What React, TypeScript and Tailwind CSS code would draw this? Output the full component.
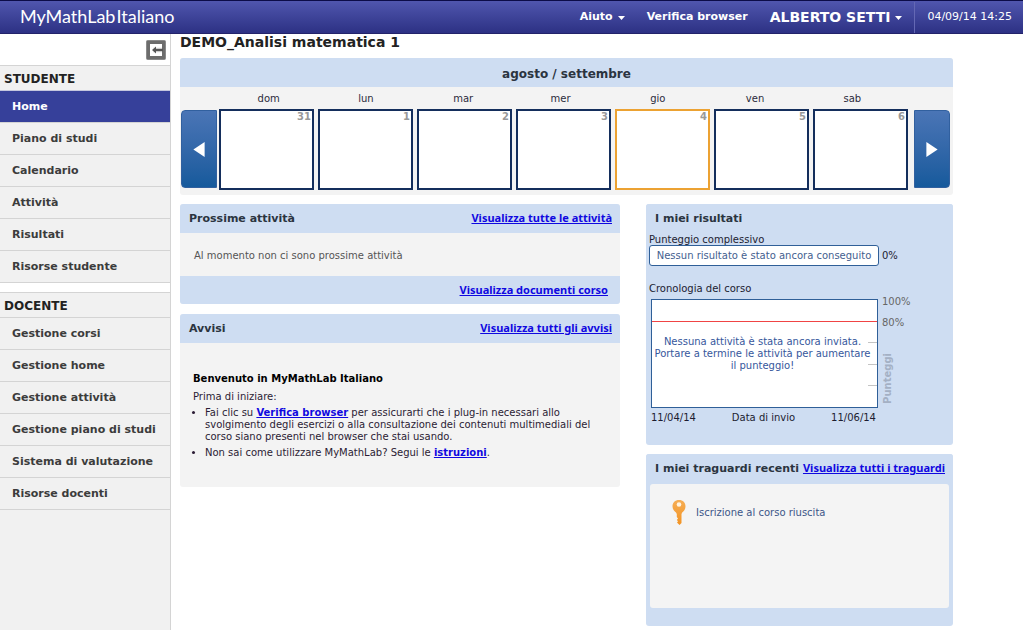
import React from 'react';
import { clsx } from 'clsx';

const studentLinks = ['Home', 'Piano di studi', 'Calendario', 'Attività', 'Risultati', 'Risorse studente'];

const teacherLinks = [
  'Gestione corsi',
  'Gestione home',
  'Gestione attività',
  'Gestione piano di studi',
  'Sistema di valutazione',
  'Risorse docenti',
];

const days = [
  { name: 'dom', date: 31 },
  { name: 'lun', date: 1 },
  { name: 'mar', date: 2 },
  { name: 'mer', date: 3 },
  { name: 'gio', date: 4, today: true },
  { name: 'ven', date: 5 },
  { name: 'sab', date: 6 },
];

const Caret = () => (
  <svg width="7" height="4" viewBox="0 0 7 4" fill="currentColor" aria-hidden="true">
    <path d="M0 0h7L3.5 4z" />
  </svg>
);

const Header = () => (
  <header className="flex h-[34px] items-center border-t border-b border-t-[#0c0c48] border-b-[#23236a] bg-gradient-to-b from-[#5056ae] to-[#2d3184] text-[11px] font-bold text-white">
    <a href="#" className="ml-5 flex gap-px pb-0.5 font-['Lato',sans-serif] text-[18px] font-normal">
      <span>MyMathLab</span>
      <span>Italiano</span>
    </a>
    <nav className="ml-auto flex h-full items-center pt-px">
      <button className="flex items-center gap-[5px]">
        Aiuto <Caret />
      </button>
      <a href="#" className="ml-[22px]">Verifica browser</a>
      <button className="ml-[22px] flex items-center gap-[5px] text-[14px]">
        ALBERTO SETTI <Caret />
      </button>
      <time className="ml-3 flex h-full items-center border-l border-[#6468b4] pr-[11px] pl-3 font-normal">
        04/09/14 14:25
      </time>
    </nav>
  </header>
);

const NavSection = ({ title, links, active }: { title: string; links: string[]; active?: string }) => (
  <section className="border-t border-[#d4d4d4] bg-[#f1f1f1]">
    <h2 className="flex h-6 items-center pt-0.5 pl-1 text-[12px] text-[#222]">{title}</h2>
    <ul>
      {links.map((link) => (
        <li key={link}>
          <a
            href="#"
            className={clsx(
              'flex h-8 items-center border-t pt-0.5 pl-3',
              link === active ? 'border-[#c4c6de] bg-[#36409a] text-white' : 'border-[#d4d4d4] text-[#3c3c3c]'
            )}
          >
            {link}
          </a>
        </li>
      ))}
    </ul>
  </section>
);

const Sidebar = () => (
  <aside className="flex w-[171px] shrink-0 flex-col border-r border-[#d4d4d4] text-[11px] font-bold">
    <div className="flex h-[31px] items-center justify-end pr-1">
      <button aria-label="Chiudi menu">
        <svg width="20" height="20" viewBox="0 0 20 20" fill="none">
          <rect x="0.5" y="0.5" width="19" height="19" rx="1" fill="#6c6c6c" stroke="#8a8a8a" />
          <path d="M4 4h12v3H7v6h9v3H4z" fill="#fff" />
          <path d="M7 7h9v6H7z" fill="#f5f5f5" />
          <path d="M6 10l4-3.5v2.3h7v2.400h-7v2.300z" fill="#555" />
        </svg>
      </button>
    </div>
    <NavSection title="STUDENTE" links={studentLinks} active="Home" />
    <div className="h-[10px] border-t border-[#d4d4d4]" />
    <NavSection title="DOCENTE" links={teacherLinks} />
    <div className="flex-1 border-t border-[#d4d4d4] bg-[#f1f1f1]" />
  </aside>
);

const WeekButton = ({ label, next }: { label: string; next?: boolean }) => (
  <button
    aria-label={label}
    className={clsx(
      'mt-px flex h-[78px] w-9 shrink-0 items-center justify-center border border-[#31609f] bg-gradient-to-b from-[#4a75b6] to-[#155a9c] text-white',
      next ? 'rounded-r' : 'rounded-l'
    )}
  >
    <svg width="12" height="15" viewBox="0 0 12 16" fill="currentColor">
      <path d={next ? 'M0 0v16l12-8z' : 'M12 0v16L0 8z'} />
    </svg>
  </button>
);

const Calendar = () => (
  <section className="overflow-hidden rounded-[3px] bg-[#f3f3f3] pb-[5px]">
    <h2 className="flex h-[29px] items-center justify-center bg-[#ceddf2] pt-0.5 text-[12px] font-bold text-[#2b3440]">
      agosto / settembre
    </h2>
    <div className="grid h-[22px] grid-cols-7 items-center pr-[52px] pl-10 text-center text-[10px] text-[#2b2b3c]">
      {days.map((day) => (
        <span key={day.name}>{day.name}</span>
      ))}
    </div>
    <div className="flex items-start pr-[3px] pl-px">
      <WeekButton label="Settimana precedente" />
      <div className="mr-1.5 ml-0.5 grid flex-1 grid-cols-7 gap-1">
        {days.map((day) => (
          <div
            key={day.date}
            className={clsx(
              'h-[81px] border-2 bg-white pr-px text-right text-[10px] leading-3 font-bold text-[#999]',
              day.today ? 'border-[#eca232]' : 'border-[#142e5c]'
            )}
          >
            {day.date}
          </div>
        ))}
      </div>
      <WeekButton label="Settimana successiva" next />
    </div>
  </section>
);

const TextLink = ({ children, inline }: { children: React.ReactNode; inline?: boolean }) => (
  <a
    href="#"
    className={clsx(
      'font-bold text-[#1008e0] underline',
      !inline && "font-['Noto_Sans',sans-serif] text-[11px]"
    )}
  >
    {children}
  </a>
);

const CardHeader = ({ title, link }: { title: string; link?: string }) => (
  <div className="flex h-[29px] items-center justify-between bg-[#ceddf2] pr-2 pl-[9px] whitespace-nowrap">
    <h2 className="pt-0.5 text-[11px] font-bold text-[#2b3440]">{title}</h2>
    {link && <TextLink>{link}</TextLink>}
  </div>
);

const Activities = () => (
  <section className="overflow-hidden rounded-[3px] bg-[#f3f3f3]">
    <CardHeader title="Prossime attività" link="Visualizza tutte le attività" />
    <p className="flex h-[43px] items-center pt-0.5 pl-3.5 text-[10px] text-[#555]">
      Al momento non ci sono prossime attività
    </p>
    <div className="flex h-7 items-center justify-end bg-[#ceddf2] pr-3 text-[10px]">
      <TextLink>Visualizza documenti corso</TextLink>
    </div>
  </section>
);

const News = () => (
  <section className="overflow-hidden rounded-[3px] bg-[#f3f3f3]">
    <CardHeader title="Avvisi" link="Visualizza tutti gli avvisi" />
    <div className="px-[13px] pt-[30px] pb-7 text-[10px] leading-3 text-[#2b1c34]">
      <h3 className="font-bold text-black">Benvenuto in MyMathLab Italiano</h3>
      <p className="mt-1.5">Prima di iniziare:</p>
      <ul className="mt-1 list-disc space-y-1 pl-3">
        <li>
          Fai clic su <TextLink inline>Verifica browser</TextLink> per assicurarti che i plug-in necessari allo
          svolgimento degli esercizi o alla consultazione dei contenuti multimediali del corso siano presenti nel
          browser che stai usando.
        </li>
        <li>
          Non sai come utilizzare MyMathLab? Segui le <TextLink inline>istruzioni</TextLink>.
        </li>
      </ul>
    </div>
  </section>
);

const Results = () => (
  <section className="h-[241px] overflow-hidden rounded-[3px] bg-[#ceddf2] text-[10px] text-[#1c1c30]">
    <CardHeader title="I miei risultati" />
    <div className="px-[3px]">
      <p className="pt-0.5 leading-[10px]">Punteggio complessivo</p>
      <div className="flex items-center gap-[3px]">
        <div className="h-[21px] w-[230px] rounded-[3px] border border-[#2f5f98] bg-white text-center leading-[19px] whitespace-nowrap text-[#44608f]">
          Nessun risultato è stato ancora conseguito
        </div>
        0%
      </div>
      <p className="mt-4 pt-px leading-3">Cronologia del corso</p>
      <div className="mt-1 flex gap-1 pl-0.5">
        <div className="relative h-[109px] w-[227px]">
          <svg className="h-full w-full" viewBox="0 0 227 109" fill="none">
            <rect x="0.5" y="0.5" width="226" height="108" fill="#fff" stroke="#2f5f98" />
            <rect x="1" y="22" width="225" height="1" fill="#f04444" />
            <path d="M217 43.5h9M217 65.5h9M217 86.5h9" stroke="#c4c4c4" />
          </svg>
          <p className="absolute inset-x-0 top-[37px] -ml-1 text-center leading-3 whitespace-nowrap text-[#36579c]">
            Nessuna attività è stata ancora inviata.
            <br />
            Portare a termine le attività per aumentare
            <br />
            il punteggio!
          </p>
        </div>
        <div className="flex flex-col text-[#666]">
          <span className="h-[21px] leading-[5px]">100%</span>
          <span className="leading-[5px]">80%</span>
          <span className="mt-auto rotate-180 pt-1 leading-3 font-bold text-[#a4b0c4] [writing-mode:vertical-rl]">
            Punteggi
          </span>
        </div>
      </div>
      <div className="mt-0.5 flex w-[227px] justify-between pl-0.5">
        <span>11/04/14</span>
        <span>Data di invio</span>
        <span>11/06/14</span>
      </div>
    </div>
  </section>
);

const KeyIcon = () => (
  <svg width="14" height="25" viewBox="0 0 14 25" fill="none" aria-hidden="true">
    <defs>
      <linearGradient id="keyFill" x1="0" y1="0" x2="0" y2="1">
        <stop offset="0" stopColor="#f5ad55" />
        <stop offset="1" stopColor="#f39322" />
      </linearGradient>
    </defs>
    <path
      fill="url(#keyFill)"
      d="M7 0c4 0 6.500 2.600 6.500 6.200 0 3-1.300 4.800-3.300 6.300L9.500 14v9L7.500 25 5 22.500l1-1.200L4.800 20 6 18.500 4.800 17v-3L4 12.500C2 11 .5 9.200.5 6.200.5 2.600 3 0 7 0z"
    />
    <circle cx="7" cy="4.500" r="2.300" fill="#fff3e0" />
  </svg>
);

const Achievements = () => (
  <section className="overflow-hidden rounded-[3px] bg-[#ceddf2] pb-[18px]">
    <CardHeader title="I miei traguardi recenti" link="Visualizza tutti i traguardi" />
    <div className="mx-1 mt-px h-[124px] rounded-[3px] bg-[#f4f4f4] pt-4 pl-[22px]">
      <div className="flex items-center gap-2.5 text-[10px] text-[#3c5688]">
        <KeyIcon />
        Iscrizione al corso riuscita
      </div>
    </div>
  </section>
);

const App = () => {
  return (
    <div className="flex min-h-screen flex-col bg-white font-['Verdana','DejaVu_Sans',sans-serif]">
      <Header />
      <div className="flex flex-1">
        <Sidebar />
        <main className="flex-1 pr-[70px] pb-1 pl-[9px]">
          <h1 className="h-6 text-[14px] leading-4 font-bold text-[#222]">DEMO_Analisi matematica 1</h1>
          <Calendar />
          <div className="mt-[9px] flex items-start gap-[26px]">
            <div className="flex flex-1 flex-col gap-2.5">
              <Activities />
              <News />
            </div>
            <div className="flex w-[307px] shrink-0 flex-col gap-[9px]">
              <Results />
              <Achievements />
            </div>
          </div>
        </main>
      </div>
    </div>
  );
};

export default App;
